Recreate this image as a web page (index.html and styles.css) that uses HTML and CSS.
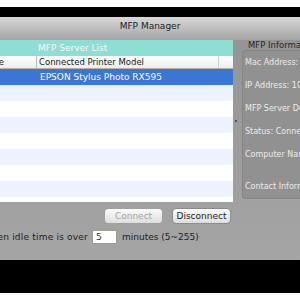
FILE: index.html
```html
<!DOCTYPE html>
<html>
<head>
<meta charset="utf-8">
<link rel="stylesheet" href="styles.css">
</head>
<body>
<div class="top-gap"></div>
<div class="black-bar"></div>
<div class="window">
  <div class="titlebar">MFP Manager</div>
  <div class="content">
    <div class="list-pane">
      <div class="list-title">MFP Server List</div>
      <div class="list-header">
        <div class="col col-a"><span>Name</span></div>
        <div class="col col-b">Connected Printer Model</div>
        <div class="col col-c"></div>
      </div>
      <div class="rows">
        <div class="row selected"><div class="cell-a"></div><div class="cell-b">EPSON Stylus Photo RX595</div></div>
        <div class="row"></div>
        <div class="row"></div>
        <div class="row"></div>
        <div class="row"></div>
        <div class="row"></div>
        <div class="row"></div>
        <div class="row"></div>
        <div class="row"></div>
      </div>
    </div>
    <div class="splitter"><span class="grip"></span></div>
    <div class="info-pane">
      <div class="info-title">MFP Information</div>
      <div class="info-box">
        <div class="info-line">Mac Address: 00:26:AB:3C:5D:6E</div>
        <div class="info-line">IP Address: 10.0.1.12</div>
        <div class="info-line">MFP Server Description:</div>
        <div class="info-line">Status: Connected</div>
        <div class="info-line">Computer Name:</div>
        <div class="info-line contact">Contact Information:</div>
      </div>
    </div>
  </div>
  <div class="buttons">
    <div class="btn disabled">Connect</div>
    <div class="btn">Disconnect</div>
  </div>
  <div class="idle-row">
    <div class="idle-label"><span>Disconnect when idle time is over</span></div>
    <div class="idle-input">5</div>
    <div class="idle-suffix">minutes (5~255)</div>
  </div>
</div>
<div class="bottom-bar"></div>
</body>
</html>
```

FILE: styles.css
```css
html, body {
  margin: 0;
  padding: 0;
}
body {
  width: 300px;
  height: 300px;
  overflow: hidden;
  background: #ffffff;
  font-family: "DejaVu Sans", sans-serif;
  font-size: 9px;
  color: #1e1e1e;
}
.top-gap {
  height: 7px;
  background: #ffffff;
}
.black-bar {
  height: 10px;
  background: #000000;
}
.window {
  height: 243px;
  background: linear-gradient(#939393, #a5a5a5);
  display: flex;
  flex-direction: column;
  overflow: hidden;
}
.titlebar {
  height: 23px;
  box-sizing: border-box;
  padding-top: 3px;
  line-height: 13px;
  text-align: center;
  background: linear-gradient(#d8d8d8, #a4a4a4);
  color: #222222;
}
.content {
  display: flex;
  height: 162px;
}
.list-pane {
  width: 233px;
  flex: none;
  display: flex;
  flex-direction: column;
  background: #ffffff;
  overflow: hidden;
}
.list-title {
  height: 16px;
  line-height: 16px;
  padding-left: 38px;
  background: #8fded3;
  color: #f6f6f6;
}
.list-header {
  height: 12px;
  line-height: 12px;
  display: flex;
  border-bottom: 1px solid #b2b2b2;
  background: linear-gradient(#ffffff, #ededed);
  font-size: 8.5px;
  color: #1a1a1a;
}
.col {
  box-sizing: border-box;
  white-space: nowrap;
  overflow: hidden;
}
.col-a {
  width: 37px;
  padding-right: 32px;
  border-right: 1px solid #bdbdbd;
  display: flex;
  justify-content: flex-end;
}
.col-a span {
  flex: none;
}
.col-b {
  width: 182px;
  padding-left: 2px;
  border-right: 1px solid #cfcfcf;
}
.col-c {
  flex: 1;
}
.rows {
  flex: 1;
  overflow: hidden;
}
.row {
  height: 16px;
  line-height: 16px;
  display: flex;
}
.row:nth-child(even) {
  background: #edf3fe;
}
.row.selected {
  background: #3b76d7;
  color: #ffffff;
}
.cell-a {
  width: 37px;
}
.cell-b {
  padding-left: 3px;
  white-space: nowrap;
}
.splitter {
  width: 9px;
  flex: none;
  display: flex;
  align-items: center;
}
.grip {
  width: 2px;
  height: 2px;
  margin-left: 2px;
  background: #3a3a3a;
  border-radius: 1px;
}
.info-pane {
  flex: 1;
  display: flex;
  flex-direction: column;
  min-width: 0;
}
.info-title {
  height: 10px;
  line-height: 10px;
  padding-left: 6px;
  white-space: nowrap;
  font-size: 8.5px;
  color: #262626;
}
.info-box {
  height: 149px;
  box-sizing: border-box;
  width: 120px;
  border: 1px solid #848484;
  border-radius: 3px;
  background: #919191;
  box-shadow: 0 1px 0 #a6a6a6;
  padding-left: 2px;
  font-size: 8px;
  color: #ececec;
}
.info-line {
  height: 23px;
  line-height: 23px;
  white-space: nowrap;
}
.info-line.contact {
  margin-top: 9px;
}
.buttons {
  display: flex;
  gap: 9px;
  padding-left: 104px;
  margin-top: 6px;
}
.btn {
  width: 59px;
  height: 16px;
  box-sizing: border-box;
  border: 1px solid #8c8c8c;
  border-radius: 4px;
  background: linear-gradient(#fbfbfb, #dedede);
  text-align: center;
  line-height: 14px;
  color: #1e1e1e;
}
.btn.disabled {
  color: #a3a3a3;
  border-color: #a0a0a0;
}
.idle-row {
  display: flex;
  align-items: center;
  height: 14px;
  margin-top: 6px;
}
.idle-label {
  width: 88px;
  flex: none;
  display: flex;
  justify-content: flex-end;
  overflow: hidden;
  white-space: nowrap;
  margin-right: 4px;
  letter-spacing: 0.2px;
}
.idle-label span {
  flex: none;
}
.idle-input {
  width: 25px;
  height: 14px;
  box-sizing: border-box;
  background: #ffffff;
  border: 1px solid #9c9c9c;
  padding-left: 3px;
  line-height: 12px;
  color: #333333;
}
.idle-suffix {
  margin-left: 5px;
  white-space: nowrap;
}
.bottom-bar {
  height: 33px;
  background: #000000;
}
```
